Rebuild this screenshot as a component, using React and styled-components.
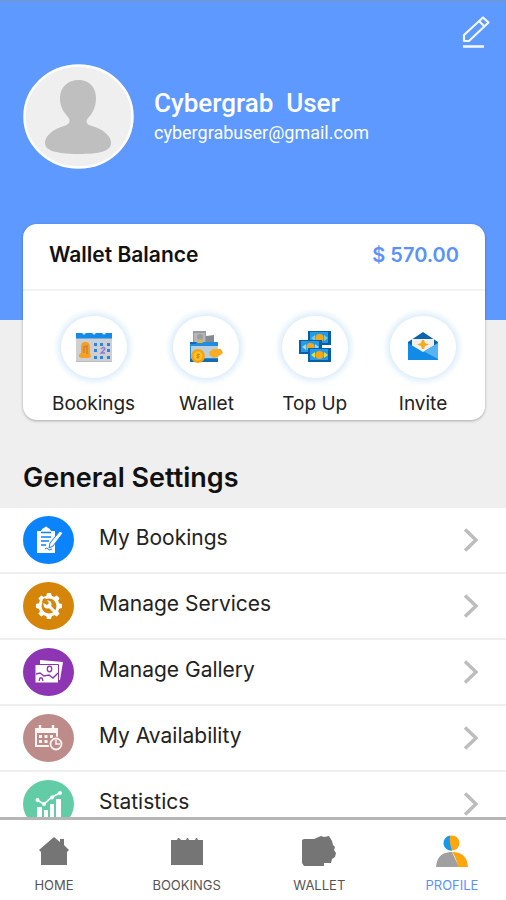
import React from "react";
import styled, { createGlobalStyle } from "styled-components";

const GlobalStyle = createGlobalStyle`
  * { box-sizing: border-box; }
  body { margin: 0; background: #efefef; font-family: Inter, "Open Sans", sans-serif; color: #111; }
  h1, h2, p, ul { margin: 0; padding: 0; }
  ul { list-style: none; }
  svg { display: block; flex: none; }
  a { color: inherit; text-decoration: none; }
  button { font: inherit; color: inherit; background: none; border: 0; padding: 0; cursor: pointer; }
`;

const Shell = styled.div`
  height: 100vh;
  display: flex;
  flex-direction: column;
`;

const Content = styled.main`
  flex: 1;
  min-height: 0;
  overflow-y: auto;
  scrollbar-width: none;
`;

const Hero = styled.header`
  height: 320px;
  padding: 12px 15px 0 23px;
  background: #5e99ff;
  border-top: 2px solid #6c97dc;
`;

const HeroActions = styled.div`
  display: flex;
  justify-content: flex-end;
`;

const EditButton = styled.button`
  height: 36px;
`;

const Identity = styled.div`
  display: flex;
  align-items: center;
  gap: 20px;
  margin-top: 14px;
`;

const Avatar = styled.svg`
  width: 111px;
  height: 105px;
`;

const UserText = styled.div`
  font-family: Roboto, sans-serif;
  color: #fff;
`;

const UserName = styled.h1`
  font-size: 26px;
  font-weight: 500;
  line-height: 32px;
  white-space: pre;
`;

const UserEmail = styled.p`
  font-size: 18px;
  line-height: 28px;
`;

const WalletCard = styled.section`
  position: relative;
  margin: -96px 21px 0 23px;
  background: #fff;
  border-radius: 14px;
  box-shadow: 0 1px 3px rgba(0, 0, 0, 0.3);
`;

const BalanceRow = styled.div`
  display: flex;
  justify-content: space-between;
  align-items: center;
  height: 67px;
  padding: 0 26px 4px;
  border-bottom: 2px solid #f3f3f3;
`;

const BalanceLabel = styled.h2`
  font-size: 21px;
  font-weight: 600;
`;

const BalanceAmount = styled.p`
  font-size: 20px;
  font-weight: 600;
  color: #5a92f8;
`;

const QuickActions = styled.div`
  display: flex;
  justify-content: space-between;
  padding: 25px 25px 4px 29px;
`;

const QuickAction = styled.button`
  display: flex;
  flex-direction: column;
  align-items: center;
  min-width: 74px;
  font-size: 19px;
  line-height: 24px;
  color: #222;
`;

const QuickCircle = styled.span`
  display: grid;
  place-items: center;
  width: 66px;
  height: 62px;
  margin-bottom: 14px;
  border-radius: 50%;
  box-shadow: 0 0 6px 3px #d9ebfa;
`;

const SectionTitle = styled.h2`
  padding: 38px 23px 10px;
  font-size: 27px;
  font-weight: 600;
  line-height: 40px;
`;

const SettingsLink = styled.a`
  display: flex;
  align-items: center;
  height: 66px;
  padding: 0 27px 0 23px;
  background: #fff;
  border-bottom: 2px solid #efefef;
`;

const SettingsIcon = styled.span`
  display: grid;
  place-items: center;
  width: 51px;
  height: 48px;
  margin-right: 25px;
  border-radius: 50%;
  background: ${(p) => p.$color};
`;

const SettingsLabel = styled.span`
  flex: 1;
  padding-bottom: 4px;
  font-size: 21px;
  line-height: 28px;
  color: #222;
`;

const TabBar = styled.nav`
  display: flex;
  justify-content: space-between;
  height: 83px;
  padding: 15px 18px 0;
  background: #fff;
  border-top: 3px solid #b5b5b5;
`;

const Tab = styled.a`
  display: flex;
  flex-direction: column;
  align-items: center;
  gap: 9px;
  width: 72px;
  font-size: 13px;
  line-height: 18px;
  color: ${(p) => (p.$active ? "#5a92f8" : "#555")};
`;

const EditIcon = () => (
  <svg width="30" height="36" viewBox="0 0 30 36" fill="none" stroke="#f2f8ff" strokeWidth="2.2">
    <path d="M3 27V21L22 3.500L27.500 8.500L8 27Z M18 7L23.500 12.500" strokeLinejoin="round" />
    <path d="M2 32.500H23" strokeWidth="2.600" />
  </svg>
);

const AvatarImage = () => (
  <Avatar viewBox="0 0 111 105" role="img" aria-label="Profile photo">
    <ellipse cx="55.500" cy="52.500" rx="54" ry="51" fill="#efefef" stroke="#fff" strokeWidth="2.500" />
    <path fill="#bfbfbf" d="M55.500 16C66 16 73 23 73 34C73 45 68 51 65 54C62 58 64 61 69 62C79 65 88 71 88 79C88 87 78 90 55 90C32 90 22 86 22 79C22 71 31 65 41 62C47 60 48 57 45 53C41 48 37 44 37 34C37 23 45 16 55.500 16Z" />
  </Avatar>
);

const CalendarArt = () => (
  <svg width="38" height="34" viewBox="0 0 38 34">
    <path fill="#cfcfd1" d="M1 5H37V32H1Z" />
    <path fill="#b9bcc0" d="M1 31H37V32H1Z" />
    <path fill="#1389e8" d="M1 3H37V8.500H1Z" />
    <g fill="#eceff2"><circle cx="9" cy="3" r="1.600" /><circle cx="19" cy="3" r="1.600" /><circle cx="29" cy="3" r="1.600" /></g>
    <path fill="#f4a023" d="M4 27V25L6 23V17Q6 12 10 12Q15 12 15 17V23L16 27L13 28H7Z" />
    <path stroke="#c97d3b" strokeWidth="1.300" fill="none" d="M9 23V17L12 16V24" />
    <path fill="#2585e2" d="M19 13H22V16H19ZM25 13H28V16H25ZM32 13H35V16H32ZM19 19H22V22H19ZM32 19H35V22H32ZM19 26H22V29H19ZM25 26H28V29H25ZM32 26H35V29H32Z" />
    <path d="M26 19Q29 16 30 19L26 23H30" stroke="#837bdf" fill="none" strokeWidth="1.300" />
  </svg>
);

const WalletArt = () => (
  <svg width="36" height="34" viewBox="0 0 36 34">
    <path fill="#999b9e" d="M5 1H18V18H5Z" />
    <path fill="#b4b6b8" d="M6 3H17V12H6Z" />
    <circle cx="12" cy="7" r="3" fill="#9b9da0" />
    <path fill="#858a90" d="M18 6L26 5V18H18Z" />
    <path fill="#1f8ee0" d="M2 12H30V32H2Z" />
    <path fill="#1769b5" d="M2 12H8V14H2ZM2 29H30V32H2Z" />
    <path fill="#b9cfe0" d="M3 16H30V28H3Z" />
    <path fill="#f1b71e" d="M9 13L12 9L15 13Z" />
    <circle cx="10" cy="26" r="7" fill="#f5a414" />
    <circle cx="10" cy="26" r="4.500" fill="#ffc229" />
    <path d="M10 23V29M12 24.500H9V26H11V27.500H8" stroke="#df8b0d" fill="none" />
    <path fill="#f9ad24" d="M21 22L25 19H33L35 23L31 26L26 28L22 26Z" />
  </svg>
);

const Note = ({ x, y, mark }) => (
  <g transform={`translate(${x} ${y})`}>
    <path fill="#075fa9" d="M0 0H23V14H0Z" />
    <path fill="#249be7" d="M2 1H20V12H2Z" />
    <path fill={mark} d="M3 7L7 4V10ZM20 7L16 4V10Z" />
    <circle cx="11.500" cy="7" r="4" fill="#f5a71c" />
  </g>
);

const NotesArt = () => (
  <svg width="36" height="34" viewBox="0 0 36 34">
    <Note x={11} y={1} mark="#77d1cc" />
    <Note x={2} y={10} mark="#9ed6f7" />
    <Note x={11} y={18} mark="#dbe14b" />
  </svg>
);

const EnvelopeArt = () => (
  <svg width="34" height="32" viewBox="0 0 34 32">
    <path fill="#0c64ae" d="M2 11L17 1L32 11V18H2Z" />
    <path fill="#f1efec" d="M6 8H28V22H6Z" />
    <path fill="#118be7" d="M2 12L17 21L32 12V29H2Z" />
    <path fill="#56b4f0" d="M18 20.500L32 12V28Z" />
    <path fill="#f3ab20" d="M16 9H18L19 12L23 13.500L19 15L18 18H16L15 15L11 13.500L15 12Z" />
  </svg>
);

const ClipboardIcon = () => (
  <svg width="28" height="28" viewBox="0 0 28 28">
    <path fill="#fff" d="M2 5H6Q7 2 9 2Q11 -1 13 2Q15 2 16 5H20V27H2Z" />
    <path d="M6 6.500H16M6 11H16M6 15H14M6 19H11" stroke="#0a83fb" strokeWidth="1.400" />
    <path d="M14 22L15 17L25 5L28 7L18 20Z" fill="#fff" stroke="#0a83fb" />
    <path d="M10 23Q12 21 13 23T17 23" fill="none" stroke="#0a83fb" />
  </svg>
);

const GearIcon = () => (
  <svg width="28" height="28" viewBox="0 0 28 28">
    <g fill="#fff">
      <circle cx="14" cy="14" r="10.500" />
      {[0, 45, 90, 135, 180, 225, 270, 315].map((a) => (
        <path key={a} d="M11 5L12 1H16L17 5Z" transform={`rotate(${a} 14 14)`} />
      ))}
    </g>
    <circle cx="14" cy="14" r="7.500" fill="#d58509" />
    <path d="M14 14L20 20" stroke="#fff" strokeWidth="3" />
    <circle cx="12.500" cy="12.500" r="4" fill="#fff" />
    <path d="M8 7L10 6L14 11L12 13L7 10Z" fill="#d58509" />
  </svg>
);

const GalleryIcon = () => (
  <svg width="30" height="26" viewBox="0 0 30 26">
    <path fill="#fff" d="M6 1L29 3L26 21H6Z" />
    <path fill="#fff" stroke="#8d35b2" d="M1 5.500H24.500V24H1Z" />
    <ellipse cx="15.500" cy="10" rx="2.200" ry="2.800" fill="none" stroke="#8d35b2" strokeWidth="1.300" />
    <path d="M2 15L6 14L10 17L15 16L19 19L24 14" fill="none" stroke="#8d35b2" strokeWidth="1.400" />
    <path d="M5 22L6 19H8L9 22" fill="none" stroke="#8d35b2" strokeWidth="1.300" />
  </svg>
);

const AvailabilityIcon = () => (
  <svg width="30" height="28" viewBox="0 0 30 28" fill="none" stroke="#fff5f2">
    <path d="M2 5H23V22H2Z" strokeWidth="2" />
    <path d="M2 7H23" strokeWidth="4" />
    <path d="M6 1V5M19 1V5" strokeWidth="2.500" />
    <path d="M5 12.500H8M10.500 12.500H13.500M16 12.500H19M5 17.500H8M10.500 17.500H13.500" strokeWidth="3" />
    <circle cx="22" cy="20" r="7" fill="#bd8b89" stroke="#bd8b89" />
    <circle cx="22" cy="20" r="5.500" strokeWidth="1.800" />
    <path d="M22 16V20H26" strokeWidth="1.500" />
  </svg>
);

const StatsIcon = () => (
  <svg width="28" height="30" viewBox="0 0 28 30">
    <path fill="#fff" d="M2 18H7V29H2ZM9 21H13V29H9ZM15 15H19V29H15ZM21 10H26V29H21Z" />
    <path d="M2 11L9 15L17 8L25 4" fill="none" stroke="#fff" strokeWidth="1.600" />
    <g fill="#fff"><circle cx="2.500" cy="11" r="2" /><circle cx="9" cy="15" r="2" /><circle cx="17" cy="8.500" r="2" /><circle cx="25" cy="4" r="2" /></g>
  </svg>
);

const Chevron = () => (
  <svg width="16" height="24" viewBox="0 0 16 24" fill="none" stroke="#bdbdbd" strokeWidth="3.500">
    <path d="M2 1.500L13 12L2 22.500" />
  </svg>
);

const HomeIcon = () => (
  <svg width="32" height="32" viewBox="0 0 32 32" fill="#757575">
    <path d="M1 15L16 2L22 7V4H26V10L31 15L29 17V30H3V17Z" />
  </svg>
);

const BookingsIcon = () => (
  <svg width="32" height="32" viewBox="0 0 32 32" fill="#757575">
    <path d="M0 5H6L7 3H8L10 5H15L16 3H17L18 5H24L25 3H26L27 5H32V30H0Z" />
  </svg>
);

const WalletIcon = () => (
  <svg width="36" height="32" viewBox="0 0 36 32" fill="#757575">
    <path d="M1 5L3 4H13L20 1L23 2L28 1L31 6L32 10L34 12L33 15L35 18L34 22L31 24L30 28H23V31H3L1 28Z" />
  </svg>
);

const ProfileIcon = () => (
  <svg width="32" height="32" viewBox="0 0 32 32">
    <circle cx="16" cy="8" r="7.500" fill="#ffa50d" />
    <path fill="#1398ee" d="M14 0.500A7.500 7.500 0 0 0 16 15.500Q13 8 14 0.500Z" />
    <path fill="#a0a0a0" d="M0 32Q1 17 16 17L23 32Z" />
    <path fill="#ffa50d" d="M16 17Q31 17 32 32H22Q21 24 16 17Z" />
  </svg>
);

const quickActions = [
  { label: "Bookings", Art: CalendarArt },
  { label: "Wallet", Art: WalletArt },
  { label: "Top Up", Art: NotesArt },
  { label: "Invite", Art: EnvelopeArt },
];

const settings = [
  { label: "My Bookings", color: "#0a83fb", Icon: ClipboardIcon },
  { label: "Manage Services", color: "#d58509", Icon: GearIcon },
  { label: "Manage Gallery", color: "#8d35b2", Icon: GalleryIcon },
  { label: "My Availability", color: "#bd8b89", Icon: AvailabilityIcon },
  { label: "Statistics", color: "#61cca5", Icon: StatsIcon },
];

const tabs = [
  { label: "HOME", Icon: HomeIcon },
  { label: "BOOKINGS", Icon: BookingsIcon },
  { label: "WALLET", Icon: WalletIcon },
  { label: "PROFILE", Icon: ProfileIcon, active: true },
];

export default function App() {
  return (
    <Shell>
      <GlobalStyle />
      <Content>
        <Hero>
          <HeroActions>
            <EditButton type="button" aria-label="Edit profile"><EditIcon /></EditButton>
          </HeroActions>
          <Identity>
            <AvatarImage />
            <UserText>
              <UserName>{"Cybergrab  User"}</UserName>
              <UserEmail>cybergrabuser@gmail.com</UserEmail>
            </UserText>
          </Identity>
        </Hero>
        <WalletCard>
          <BalanceRow>
            <BalanceLabel>Wallet Balance</BalanceLabel>
            <BalanceAmount>$ 570.00</BalanceAmount>
          </BalanceRow>
          <QuickActions>
            {quickActions.map(({ label, Art }) => (
              <QuickAction key={label} type="button">
                <QuickCircle><Art /></QuickCircle>
                {label}
              </QuickAction>
            ))}
          </QuickActions>
        </WalletCard>
        <SectionTitle>General Settings</SectionTitle>
        <ul>
          {settings.map(({ label, color, Icon }) => (
            <li key={label}>
              <SettingsLink href="#">
                <SettingsIcon $color={color}><Icon /></SettingsIcon>
                <SettingsLabel>{label}</SettingsLabel>
                <Chevron />
              </SettingsLink>
            </li>
          ))}
        </ul>
      </Content>
      <TabBar>
        {tabs.map(({ label, Icon, active }) => (
          <Tab key={label} href="#" $active={active} aria-current={active ? "page" : undefined}>
            <Icon />
            {label}
          </Tab>
        ))}
      </TabBar>
    </Shell>
  );
}
